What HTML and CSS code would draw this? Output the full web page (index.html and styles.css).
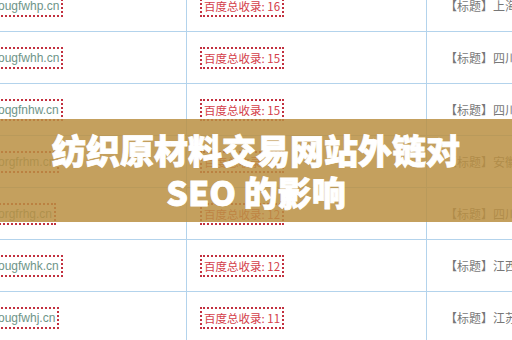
FILE: index.html
```html
<!DOCTYPE html>
<html lang="zh-CN">
<head>
<meta charset="utf-8">
<title>纺织原材料交易网站外链对SEO的影响</title>
<link rel="stylesheet" href="styles.css">
</head>
<body>
<div class="page">
  <div class="table">
    <div class="row">
      <div class="cell c1"><span class="box dom">sougfwhp.cn</span></div>
      <div class="cell c2"><span class="box cnt">百度总收录: 16</span></div>
      <div class="cell c3">【标题】上海</div>
    </div>
    <div class="row">
      <div class="cell c1"><span class="box dom">sougfwhh.cn</span></div>
      <div class="cell c2"><span class="box cnt">百度总收录: 15</span></div>
      <div class="cell c3">【标题】四川</div>
    </div>
    <div class="row">
      <div class="cell c1"><span class="box dom">soqgfnhw.cn</span></div>
      <div class="cell c2"><span class="box cnt">百度总收录: 15</span></div>
      <div class="cell c3">【标题】四川</div>
    </div>
    <div class="row">
      <div class="cell c1"><span class="box dom">sorgfrhm.cn</span></div>
      <div class="cell c2"><span class="box cnt">百度总收录: 15</span></div>
      <div class="cell c3">【标题】安徽</div>
    </div>
    <div class="row">
      <div class="cell c1"><span class="box dom">sorgfrhg.cn</span></div>
      <div class="cell c2"><span class="box cnt">百度总收录: 12</span></div>
      <div class="cell c3">【标题】四川</div>
    </div>
    <div class="row">
      <div class="cell c1"><span class="box dom">sougfwhk.cn</span></div>
      <div class="cell c2"><span class="box cnt">百度总收录: 12</span></div>
      <div class="cell c3">【标题】江西</div>
    </div>
    <div class="row">
      <div class="cell c1"><span class="box dom">sougfwhj.cn</span></div>
      <div class="cell c2"><span class="box cnt">百度总收录: 11</span></div>
      <div class="cell c3">【标题】江苏</div>
    </div>
  </div>
  <div class="banner">
    <h1 class="title">纺织原材料交易网站外链对<br>SEO 的影响</h1>
  </div>
</div>
</body>
</html>
```

FILE: styles.css
```css
html, body {
  margin: 0;
  padding: 0;
  background: #ffffff;
}

.page {
  position: relative;
  width: 512px;
  height: 340px;
  overflow: hidden;
  background: #ffffff;
  font-family: "Liberation Sans", "Noto Sans CJK SC", sans-serif;
}

.table {
  margin-top: -20px;
}

.row {
  display: grid;
  grid-template-columns: 187px 240px 1fr;
  height: 52px;
  box-sizing: border-box;
  border-bottom: 1px solid #b3d3ec;
}

.cell {
  display: flex;
  align-items: center;
  overflow: hidden;
  white-space: nowrap;
  box-sizing: border-box;
}

.c1,
.c2 {
  border-right: 1px solid #b3d3ec;
}

.c1 {
  justify-content: flex-start;
}

.c2 {
  padding-left: 13px;
}

.c3 {
  padding-left: 18px;
  font-family: "Noto Sans CJK SC", sans-serif;
  font-size: 12px;
  color: #777777;
}

.box {
  display: inline-block;
  border: 2px dotted #c2303f;
  line-height: 18px;
  padding: 0 2px;
}

.dom {
  margin-left: -12px;
  font-family: "Liberation Sans", sans-serif;
  font-size: 12px;
  color: #6e9488;
}

.cnt {
  font-family: "Noto Sans CJK SC", sans-serif;
  font-size: 11.5px;
  color: #d4404a;
}

.banner {
  position: absolute;
  left: 0;
  right: 0;
  top: 119px;
  height: 103px;
  background: rgba(186, 143, 66, 0.85);
  display: flex;
  align-items: center;
  justify-content: center;
}

.title {
  margin: 0;
  text-align: center;
  font-family: "Noto Sans CJK SC", sans-serif;
  font-weight: 900;
  font-size: 34px;
  line-height: 42px;
  color: #ffffff;
  -webkit-text-stroke: 0.8px #ffffff;
}
```
